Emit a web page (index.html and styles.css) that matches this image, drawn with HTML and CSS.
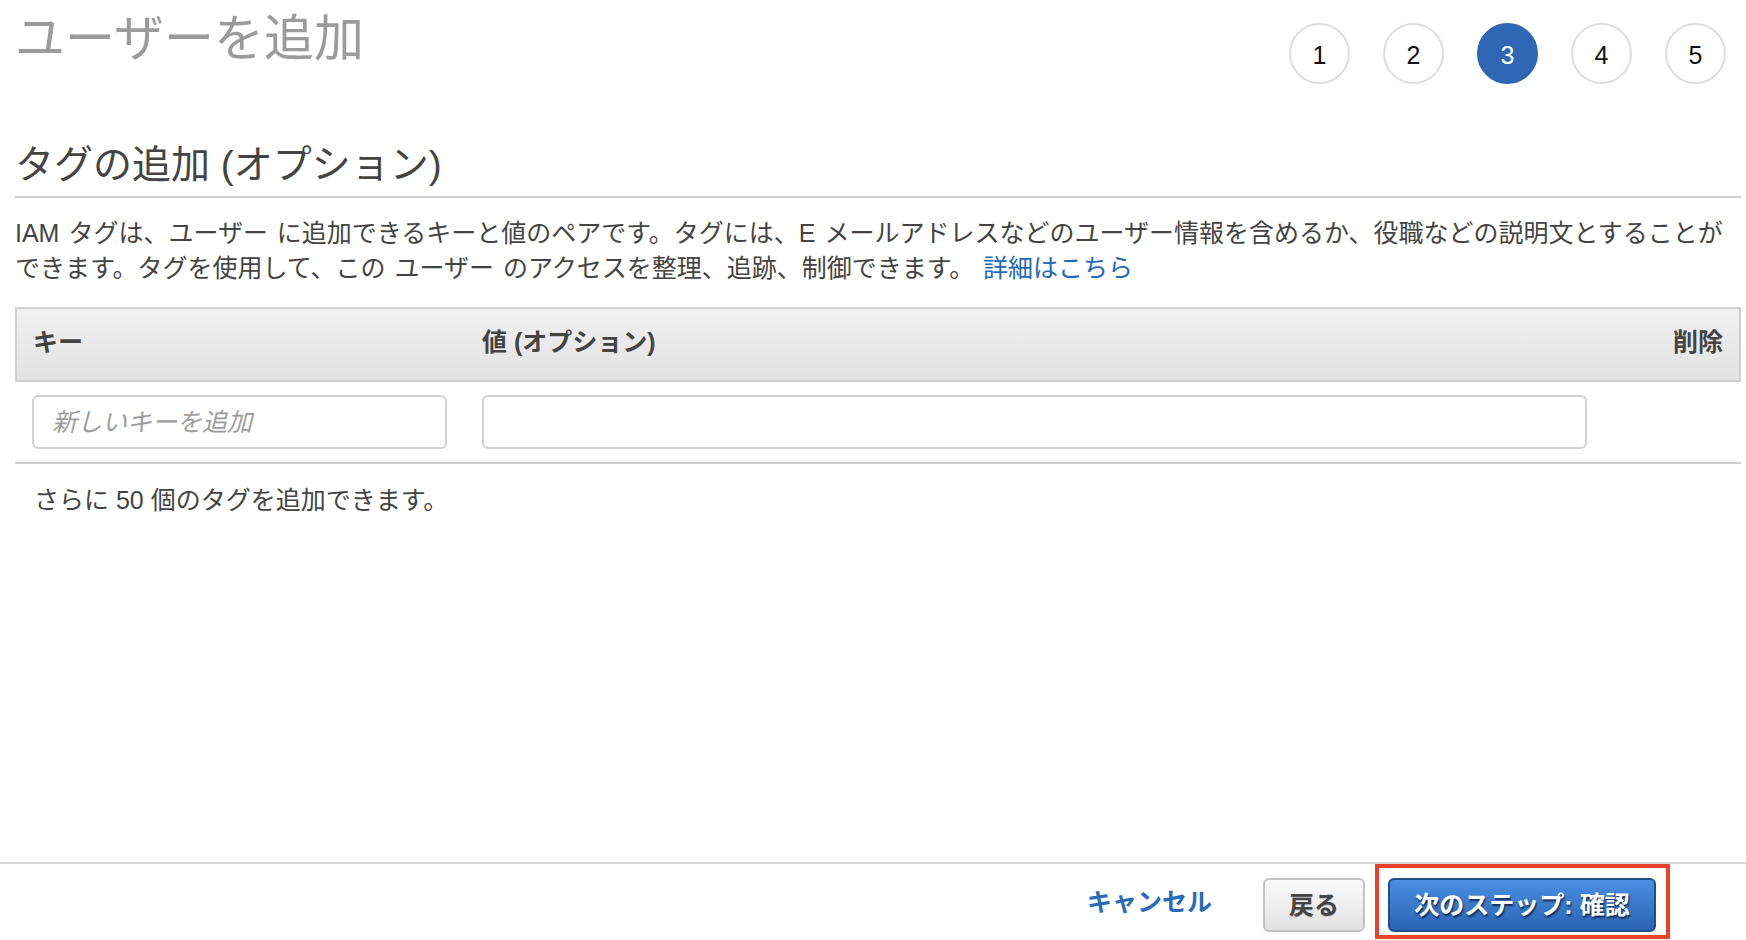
FILE: index.html
```html
<!DOCTYPE html>
<html lang="ja">
<head>
<meta charset="utf-8">
<title>ユーザーを追加</title>
<link rel="stylesheet" href="styles.css">
</head>
<body>
<div class="page">
  <main class="content">
    <header class="top">
      <h1 class="title">ユーザーを追加</h1>
      <ol class="steps">
        <li class="step">1</li>
        <li class="step">2</li>
        <li class="step step-active">3</li>
        <li class="step">4</li>
        <li class="step">5</li>
      </ol>
    </header>
    <h2 class="section-title">タグの追加 (オプション)</h2>
    <p class="desc">IAM タグは、ユーザー に追加できるキーと値のペアです。タグには、E メールアドレスなどのユーザー情報を含めるか、役職などの説明文とすることができます。タグを使用して、この ユーザー のアクセスを整理、追跡、制御できます。 <a class="link" href="#">詳細はこちら</a></p>
    <div class="tags">
      <div class="tags-head">
        <div class="th th-key">キー</div>
        <div class="th th-value">値 (オプション)</div>
        <div class="th th-del">削除</div>
      </div>
      <div class="tags-row">
        <div class="td td-key"><input class="field" type="text" placeholder="新しいキーを追加"></div>
        <div class="td td-value"><input class="field" type="text"></div>
        <div class="td td-del"></div>
      </div>
    </div>
    <p class="remaining">さらに 50 個のタグを追加できます。</p>
  </main>
  <footer class="footer">
    <a class="cancel" href="#">キャンセル</a>
    <button class="btn btn-back" type="button">戻る</button>
    <span class="highlight"><button class="btn btn-primary" type="button">次のステップ: 確認</button></span>
  </footer>
</div>
</body>
</html>
```

FILE: styles.css
```css
html, body {
  margin: 0;
  padding: 0;
  background: #fff;
}

body {
  font-family: "Liberation Sans", "Noto Sans CJK JP", sans-serif;
  color: #444;
}

.page {
  height: 940px;
  display: flex;
  flex-direction: column;
  box-sizing: border-box;
}

.content {
  padding: 0 5px 0 15px;
}

.top {
  display: flex;
  justify-content: space-between;
  align-items: flex-start;
}

.title {
  margin: 4px 0 0;
  font-family: "Noto Sans CJK JP", sans-serif;
  font-size: 50px;
  line-height: 60px;
  font-weight: 400;
  color: #9b9b9b;
}

.steps {
  display: flex;
  gap: 33px;
  list-style: none;
  margin: 23px 15px 0 0;
  padding: 0;
}

.step {
  box-sizing: border-box;
  width: 61px;
  height: 61px;
  border: 2px solid #dedede;
  border-radius: 50%;
  display: flex;
  align-items: center;
  justify-content: center;
  padding-top: 3px;
  font-family: "Liberation Sans", Arial, sans-serif;
  font-size: 25px;
  color: #111;
}

.step-active {
  background: #2f67b5;
  border-color: #2f67b5;
  color: #fff;
}

.section-title {
  margin: 58px 0 0;
  padding-bottom: 8px;
  font-size: 39px;
  line-height: 46px;
  font-weight: 400;
  color: #444;
  border-bottom: 2px solid #cfcfcf;
}

.desc {
  margin: 18px 0 0;
  font-size: 25px;
  line-height: 35px;
  word-spacing: 2px;
  color: #444;
}

.link {
  display: inline-block;
  line-height: 35px;
  color: #1f69bc;
  text-decoration: none;
}

.tags {
  margin-top: 21px;
}

.tags-head,
.tags-row {
  display: grid;
  grid-template-columns: 450px 1fr 137px;
}

.tags-head {
  border: 2px solid #cfcfcf;
  background: linear-gradient(#f1f1f1, #e2e2e2);
}

.th {
  padding: 16px 15px 20px 16px;
  font-size: 25px;
  line-height: 35px;
  font-weight: 700;
  color: #444;
}

.th-value {
  padding-left: 15px;
}

.th-del {
  text-align: right;
  padding-right: 16px;
}

.tags-row {
  padding: 13px 2px;
  border-bottom: 2px solid #cfcfcf;
}

.td-key {
  padding: 0 20px 0 15px;
}

.td-value {
  padding: 0 15px;
}

.field {
  display: block;
  box-sizing: border-box;
  width: 100%;
  height: 54px;
  margin: 0;
  padding: 0 18px 4px;
  border: 2px solid #d2d2d2;
  border-radius: 6px;
  background: #fff;
  font-family: "Noto Sans CJK JP", "Noto Sans", sans-serif;
  font-size: 25px;
  color: #444;
  outline: none;
}

.field::placeholder {
  color: #9d9d9d;
  font-style: italic;
}

.remaining {
  margin: 19px 0 0;
  padding-left: 19px;
  font-size: 25px;
  line-height: 35px;
  color: #444;
}

.footer {
  margin-top: auto;
  height: 78px;
  box-sizing: border-box;
  border-top: 2px solid #d8d8d8;
  display: flex;
  justify-content: flex-end;
  align-items: flex-start;
  padding: 14px 90px 0 0;
}

.cancel {
  margin-right: 51px;
  font-size: 25px;
  line-height: 48px;
  font-weight: 700;
  color: #2a6ab8;
  text-decoration: none;
}

.btn {
  box-sizing: border-box;
  height: 54px;
  margin: 0;
  border-radius: 6px;
  font-family: "Liberation Sans", "Noto Sans CJK JP", sans-serif;
  font-size: 25px;
  font-weight: 700;
  line-height: 1;
  padding: 2px 0 1px;
  cursor: pointer;
}

.btn-back {
  width: 102px;
  margin-right: 23px;
  border: 2px solid #c3c3c3;
  background: linear-gradient(#fbfbfb, #e2e2e2);
  color: #444;
  text-shadow: 0 1px 1px rgba(0, 0, 0, 0.2);
}

.highlight {
  position: relative;
  display: block;
}

.highlight::after {
  content: "";
  position: absolute;
  top: -14px;
  left: -13px;
  right: -14px;
  bottom: -7px;
  border: 4px solid #e8412c;
  pointer-events: none;
}

.btn-primary {
  display: block;
  width: 268px;
  border: 2px solid #1f4f8f;
  background: linear-gradient(#4a8fe2, #2a64b4);
  color: #fff;
  text-shadow: 1px 2px 2px rgba(0, 0, 20, 0.65);
}
```
